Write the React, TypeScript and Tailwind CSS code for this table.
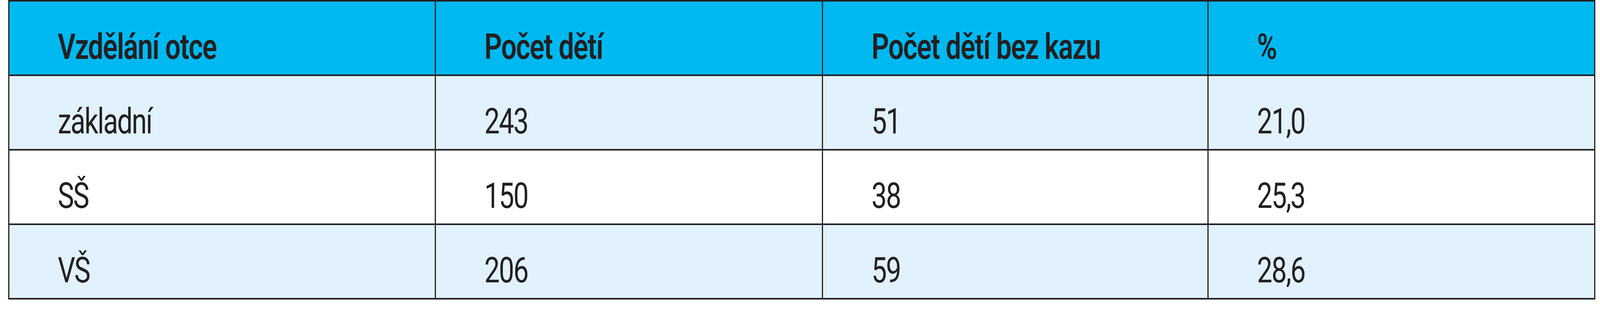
type Row = {
  edu: string
  kids: string
  noCaries: string
  pct: string
}

const rows: Row[] = [
  { edu: 'základní', kids: '243', noCaries: '51', pct: '21,0' },
  { edu: 'SŠ', kids: '150', noCaries: '38', pct: '25,3' },
  { edu: 'VŠ', kids: '206', noCaries: '59', pct: '28,6' },
]

const headers = ['Vzdělání otce', 'Počet dětí', 'Počet dětí bez kazu', '%']

// column widths follow the page width so the whole table stays in frame
const grid =
  'grid grid-cols-[1418fr_1287fr_1282fr_1283fr] h-[191px] border-b-4 border-[#231f20]'
const cell =
  'min-w-0 pl-[3.03vw] pt-12 border-r-[3px] border-[#231f20] last:border-r-0 whitespace-nowrap overflow-hidden'
// the table face is a narrow sans, so squeeze the glyphs a little
const label = 'inline-block origin-left scale-x-[0.77]'

export default function App() {
  return (
    <div className="min-h-[800px] w-full bg-white font-['Roboto',sans-serif] text-[91px] leading-normal text-[#231f20]">
      <div className="ml-[0.508vw] w-[99.21vw] border-x-[3px] border-t-4 border-[#231f20]">
        <div className={`${grid} bg-[#00b9f1]`}>
          {headers.map((h) => (
            <div key={h} className={`${cell} font-semibold tracking-[-2px]`}>
              <span className={label}>{h}</span>
            </div>
          ))}
        </div>

        {rows.map((r, i) => (
          <div
            key={r.edu}
            className={`${grid} ${i % 2 === 0 ? 'bg-[#e1f2fd]' : 'bg-white'}`}
          >
            {[r.edu, r.kids, r.noCaries, r.pct].map((v, j) => (
              <div key={j} className={`${cell} font-normal tracking-[-3px]`}>
                <span className={label}>{v}</span>
              </div>
            ))}
          </div>
        ))}
      </div>
    </div>
  )
}
